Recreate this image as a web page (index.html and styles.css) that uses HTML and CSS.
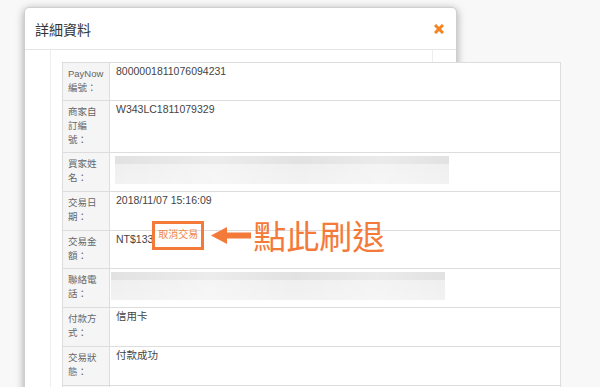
FILE: index.html
```html
<!DOCTYPE html>
<html lang="zh-Hant">
<head>
    <meta charset="UTF-8">
    <meta name="viewport" content="width=device-width, initial-scale=1.0">
    <title>詳細資料</title>
    <link rel="stylesheet" href="styles.css">
</head>
<body>
    <div class="modal">
        <div class="modal-header">
            <h4 class="modal-title">詳細資料</h4>
            <button type="button" class="close-btn">
                <svg width="10" height="10" viewBox="0 0 10 10">
                    <path d="M1 1 L9 9 M9 1 L1 9" stroke="#f5831f" stroke-width="3" fill="none"/>
                </svg>
            </button>
        </div>
        <div class="modal-body">
            <div class="panel">
                <div class="detail-table">
                    <div class="row short">
                        <div class="label">PayNow<br>編號：</div>
                        <div class="value">8000001811076094231</div>
                    </div>
                    <div class="row tall">
                        <div class="label">商家自<br>訂編<br>號：</div>
                        <div class="value">W343LC1811079329</div>
                    </div>
                    <div class="row">
                        <div class="label">買家姓<br>名：</div>
                        <div class="value"><div class="blur"></div></div>
                    </div>
                    <div class="row">
                        <div class="label">交易日<br>期：</div>
                        <div class="value">2018/11/07 15:16:09</div>
                    </div>
                    <div class="row short">
                        <div class="label">交易金<br>額：</div>
                        <div class="value">NT$133<span class="callout">
                            <span class="cancel-box">取消交易</span>
                            <svg class="arrow" width="40" height="19" viewBox="0 0 40 19">
                                <polygon points="0,9.5 16,1 16,18" fill="#f47a3a"/>
                                <rect x="15" y="6.5" width="25" height="6" fill="#f47a3a"/>
                            </svg>
                            <span class="callout-text">點此刷退</span>
                        </span></div>
                    </div>
                    <div class="row">
                        <div class="label">聯絡電<br>話：</div>
                        <div class="value"><div class="blur shift"></div></div>
                    </div>
                    <div class="row">
                        <div class="label">付款方<br>式：</div>
                        <div class="value">信用卡</div>
                    </div>
                    <div class="row">
                        <div class="label">交易狀<br>態：</div>
                        <div class="value">付款成功</div>
                    </div>
                    <div class="row">
                        <div class="label"></div>
                        <div class="value"></div>
                    </div>
                </div>
            </div>
        </div>
    </div>
</body>
</html>
```

FILE: styles.css
```css
*{
    padding: 0;
    margin: 0;
    box-sizing: border-box;
}
html, body{
    height: 100%;
    overflow: hidden;
}
body{
    background: #f8f8f8;
    font-family: "Liberation Sans", "Noto Sans CJK TC", sans-serif;
    padding: 7px 0 0 24px;
}
.modal{
    width: 433px;
    height: 420px;
    background: white;
    border: 1px solid #cfcfcf;
    border-radius: 5px;
    box-shadow: 0 2px 8px rgba(0,0,0,0.35);
}
.modal-header{
    height: 42px;
    display: flex;
    justify-content: space-between;
    align-items: center;
    padding: 0 12px 0 10px;
    border-bottom: 1px solid #e5e5e5;
}
.modal-title{
    font-size: 14px;
    font-weight: normal;
    color: #333;
}
.close-btn{
    border: none;
    background: none;
    display: flex;
}
.modal-body{
    padding-left: 25px;
}
.panel{
    width: 383px;
    height: 360px;
    border-left: 1px solid #eee;
    border-right: 1px solid #eee;
    padding: 12px 0 0 11px;
}
.detail-table{
    width: 499px;
    background: white;
    border: 1px solid #ddd;
    border-bottom: none;
}
.row{
    display: grid;
    grid-template-columns: 47px 1fr;
    height: 39px;
    border-bottom: 1px solid #ddd;
}
.row.short{
    height: 38px;
}
.row.tall{
    height: 52px;
}
.label{
    background: #f5f5f5;
    border-right: 1px solid #ddd;
    color: #666;
    font-size: 9.5px;
    line-height: 14px;
    padding: 4px 0 0 5px;
}
.value{
    color: #444;
    font-size: 10.5px;
    line-height: 14px;
    padding: 1px 0 0 6px;
    white-space: nowrap;
}
.blur{
    width: 334px;
    height: 28px;
    margin: 2px 0 0 -1px;
    background:
        linear-gradient(90deg, rgba(255,255,255,0) 0%, rgba(255,255,255,0.35) 30%, rgba(255,255,255,0) 55%, rgba(255,255,255,0.3) 80%, rgba(255,255,255,0) 100%),
        linear-gradient(#e2e2e2 0, #e2e2e2 8px, #efefef 8px, #f2f2f2 100%);
}
.blur.shift{
    margin-left: -5px;
}
.callout{
    display: inline-flex;
    align-items: center;
    vertical-align: top;
    margin: -13px 0 0 -1px;
}
.cancel-box{
    border: 3px solid #f47a3a;
    color: #ee8a4c;
    font-size: 10px;
    line-height: 14px;
    padding: 4px 3px 5px;
}
.arrow{
    margin-left: 7px;
}
.callout-text{
    color: #f47a3a;
    font-family: "Noto Sans CJK TC", sans-serif;
    font-size: 33px;
    line-height: 33px;
    margin-left: 2px;
}
```
